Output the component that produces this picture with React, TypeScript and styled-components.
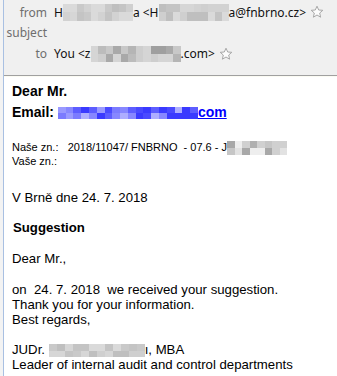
import React from "react";
import styled, { createGlobalStyle } from "styled-components";

const GlobalStyle = createGlobalStyle`
  html, body { margin: 0; padding: 0; background: #ffffff; }
  body { width: 337px; height: 376px; overflow: hidden; }
`;

const Page = styled.div`
  display: flex;
  height: 376px;
  background: #f3f3f3;
  padding-left: 3px;
`;

const Frame = styled.div`
  flex: 1;
  display: flex;
  flex-direction: column;
  border-left: 1px solid #a9c0e2;
  background: #ffffff;
`;

const Header = styled.div`
  display: flex;
  flex-direction: column;
  background: #f0f0f0;
  height: 76px;
  padding-top: 2px;
  border-bottom: 1px solid #a0a0a0;
  box-sizing: border-box;
  box-shadow: 0 1px 0 #fbfbf3;
  font-family: "Noto Sans", "Open Sans", sans-serif;
  font-size: 12px;
`;

const HeaderRow = styled.div<{ $h: number }>`
  display: flex;
  align-items: center;
  height: ${(p) => p.$h}px;
  gap: 7px;
`;

const Label = styled.span`
  width: 43px;
  text-align: right;
  color: #6e6e6e;
`;

const Value = styled.span`
  display: flex;
  align-items: center;
  color: #111111;
  white-space: nowrap;
`;

const Star = styled.svg`
  margin-left: 4px;
  width: 14px;
  height: 14px;
`;

const Body = styled.div`
  padding: 5px 0 0 8px;
  font-family: "Liberation Sans", Arial, sans-serif;
  color: #000000;
  font-size: 13.2px;
  line-height: 15px;
`;

const Greeting = styled.div`
  font-weight: bold;
  font-size: 14px;
  line-height: 21px;
`;

const Link = styled.a`
  color: #0000ff;
  text-decoration: underline;
`;

const Ref = styled.div`
  margin-top: 18px;
  font-size: 11px;
  line-height: 12px;
  white-space: pre;
`;

const Para = styled.div<{ $mt: number }>`
  margin-top: ${(p) => p.$mt}px;
  white-space: pre;
`;

const Heading = styled.div`
  margin-top: 15px;
  padding-left: 1px;
  font-weight: bold;
`;

const MosaicBox = styled.span<{ $w: number; $h: number; $cols: number; $rows: number }>`
  display: inline-grid;
  vertical-align: middle;
  width: ${(p) => p.$w}px;
  height: ${(p) => p.$h}px;
  grid-template-columns: repeat(${(p) => p.$cols}, 1fr);
  grid-template-rows: repeat(${(p) => p.$rows}, 1fr);
`;

const Cell = styled.span``;

function Mosaic({
  w,
  h,
  cells,
}: {
  w: number;
  h: number;
  cells: string[][];
}) {
  const rows = cells.length;
  const cols = cells[0].length;
  return (
    <MosaicBox $w={w} $h={h} $cols={cols} $rows={rows}>
      {cells.flatMap((r, i) =>
        r.map((c, j) => <Cell key={`${i}-${j}`} style={{ background: c }} />)
      )}
    </MosaicBox>
  );
}

function gen(rows: number, cols: number, palette: string[], seed: number): string[][] {
  let s = seed;
  const out: string[][] = [];
  for (let i = 0; i < rows; i++) {
    const r: string[] = [];
    for (let j = 0; j < cols; j++) {
      s = (s * 9301 + 49297) % 233280;
      r.push(palette[Math.floor((s / 233280) * palette.length)]);
    }
    out.push(r);
  }
  return out;
}

const greys = ["#c9c9c9", "#d2d2d2", "#cfcfcf", "#dadada", "#c4c4c4", "#d6d6d6", "#bfbfbf"];
const darkGreys = ["#b5b5b5", "#c8c8c8", "#a9a9a9", "#d5d5d5", "#bcbcbc", "#cecece", "#9f9f9f"];
const blues = ["#4a4aff", "#7b7bff", "#9a9aff", "#5d5dff", "#aeaeff", "#3a3aff", "#8787ff"];
const refGreys = ["#b0b0b0", "#d0d0d0", "#e2e2e2", "#a8a8a8", "#c6c6c6", "#eeeeee"];

const StarIcon = () => (
  <Star viewBox="0 0 14 14">
    <path
      d="M7 1.2 L8.7 5 L12.8 5.3 L9.7 8 L10.6 12.2 L7 10 L3.4 12.2 L4.3 8 L1.2 5.3 L5.3 5 Z"
      fill="#fcfcfc"
      stroke="#a8a8a8"
      strokeWidth="1"
      strokeLinejoin="round"
    />
  </Star>
);

export default function App() {
  return (
    <>
      <GlobalStyle />
      <Page>
        <Frame>
          <Header>
            <HeaderRow $h={20}>
              <Label>from</Label>
              <Value>
                H<Mosaic w={70} h={17} cells={gen(2, 10, greys, 7)} />a &lt;H
                <Mosaic w={70} h={17} cells={gen(2, 10, greys, 19)} />a@fnbrno.cz&gt;
                <StarIcon />
              </Value>
            </HeaderRow>
            <HeaderRow $h={20}>
              <Label>subject</Label>
            </HeaderRow>
            <HeaderRow $h={23}>
              <Label>to</Label>
              <Value>
                You &lt;z<Mosaic w={90} h={16} cells={gen(2, 12, darkGreys, 31)} />.com&gt;
                <StarIcon />
              </Value>
            </HeaderRow>
          </Header>
          <Body>
            <Greeting>Dear Mr.</Greeting>
            <Greeting>
              Email:{" "}
              <Link href="#">
                <Mosaic w={140} h={12} cells={gen(2, 18, blues, 5)} />
                com
              </Link>
            </Greeting>
            <Ref>
              {"Naše zn.:   2018/11047/ FNBRNO  - 07.6 - J"}
              <Mosaic w={60} h={14} cells={gen(2, 8, refGreys, 11)} />
              {"\nVaše zn.:"}
            </Ref>
            <Para $mt={23}>V Brně dne 24. 7. 2018</Para>
            <Heading>Suggestion</Heading>
            <Para $mt={16}>Dear Mr.,</Para>
            <Para $mt={16}>
              {"on  24. 7. 2018  we received your suggestion.\nThank you for your information.\nBest regards,\n "}
            </Para>
            <Para $mt={0}>
              JUDr. <Mosaic w={96} h={13} cells={gen(2, 12, greys, 23)} />
              ı, MBA
            </Para>
            <Para $mt={0}>Leader of internal audit and control departments</Para>
          </Body>
        </Frame>
      </Page>
    </>
  );
}
